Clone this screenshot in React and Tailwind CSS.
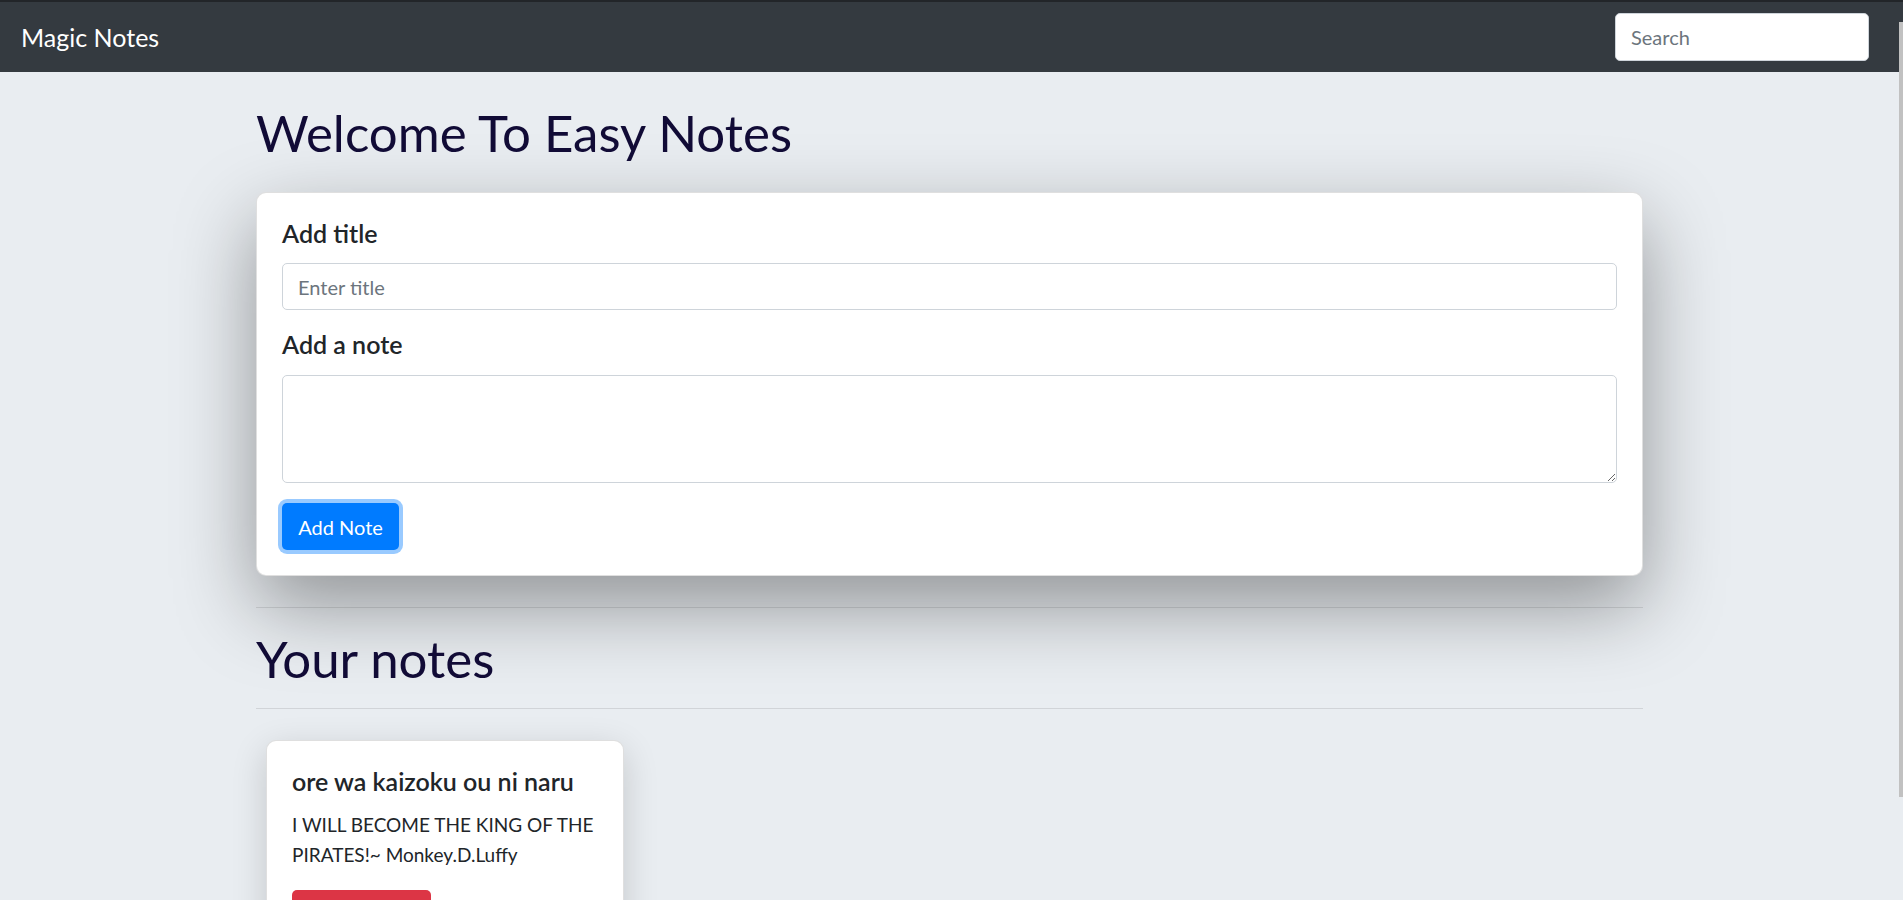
import React, { useState } from 'react';

const notes = [
  {
    title: 'ore wa kaizoku ou ni naru',
    text: 'I WILL BECOME THE KING OF THE PIRATES!~ Monkey.D.Luffy',
  },
];

const NoteCard = ({ note }) => (
  <div className="w-[358px] bg-white border border-black/[0.125] rounded-[10px] shadow-[0_10px_35px_rgba(0,0,0,0.16)] mx-[10px]">
    <div className="p-[25px]">
      <h5 className="text-[25px] leading-[30px] font-semibold text-[#212529] mb-[14px]">{note.title}</h5>
      <p className="text-[19px] leading-[30px] text-[#212529] mb-[20px]">{note.text}</p>
      <button className="w-[139px] h-[47px] rounded-[5px] bg-[#dc3545] text-white text-[20px]">
        Delete Note
      </button>
    </div>
  </div>
);

export default function App() {
  const [title, setTitle] = useState('');
  const [text, setText] = useState('');

  return (
    <div className="min-h-screen bg-[#e9edf1] font-['Lato','Liberation_Sans',sans-serif] overflow-hidden">
      <nav className="h-[72px] bg-[#343a40] border-t-2 border-[#222529] flex items-center justify-between pl-[21px] pr-[34px]">
        <a href="#" className="text-white text-[25px] leading-[30px]">Magic Notes</a>
        <input
          type="search"
          placeholder="Search"
          className="w-[254px] h-[48px] rounded-[5px] bg-white border border-[#ced4da] px-[15px] text-[20px] text-[#495057] placeholder:text-[#6c757d] outline-none"
        />
      </nav>

      <div className="pr-[4px]">
        <div className="w-[1387px] mx-auto">
          <h1 className="mt-[31px] text-[51px] leading-[60px] text-[#110b36]">Welcome To Easy Notes</h1>

          <div className="mt-[29px] bg-white border border-black/[0.125] rounded-[10px] shadow-[0_30px_80px_rgba(0,0,0,0.38)] p-[25px]">
            <label className="block text-[25px] leading-[30px] font-semibold text-[#212529] mb-[15px]">Add title</label>
            <input
              type="text"
              value={title}
              onChange={(e) => setTitle(e.target.value)}
              placeholder="Enter title"
              className="block w-full h-[47px] rounded-[5px] border border-[#ced4da] px-[15px] text-[20px] placeholder:text-[#6c757d] outline-none"
            />
            <label className="block mt-[19px] text-[25px] leading-[30px] font-semibold text-[#212529] mb-[16px]">Add a note</label>
            <textarea
              value={text}
              onChange={(e) => setText(e.target.value)}
              className="block w-full h-[108px] rounded-[5px] border border-[#ced4da] px-[15px] py-[8px] text-[20px] outline-none"
            />
            <button className="mt-[20px] w-[117px] h-[47px] rounded-[5px] bg-[#007bff] text-white text-[20px] ring-4 ring-[#007bff]/40">
              Add Note
            </button>
          </div>

          <hr className="mt-[31px] border-t border-black/10" />
          <h1 className="mt-[21px] text-[51px] leading-[60px] text-[#110b36]">Your notes</h1>
          <hr className="mt-[19px] border-t border-black/10" />

          <div className="mt-[31px] flex flex-wrap">
            {notes.map((note, i) => (
              <NoteCard key={i} note={note} />
            ))}
          </div>
        </div>
      </div>

      <div className="fixed right-0 top-[22px] w-[4px] h-[775px] bg-[#c1c1c1]" />
    </div>
  );
}
